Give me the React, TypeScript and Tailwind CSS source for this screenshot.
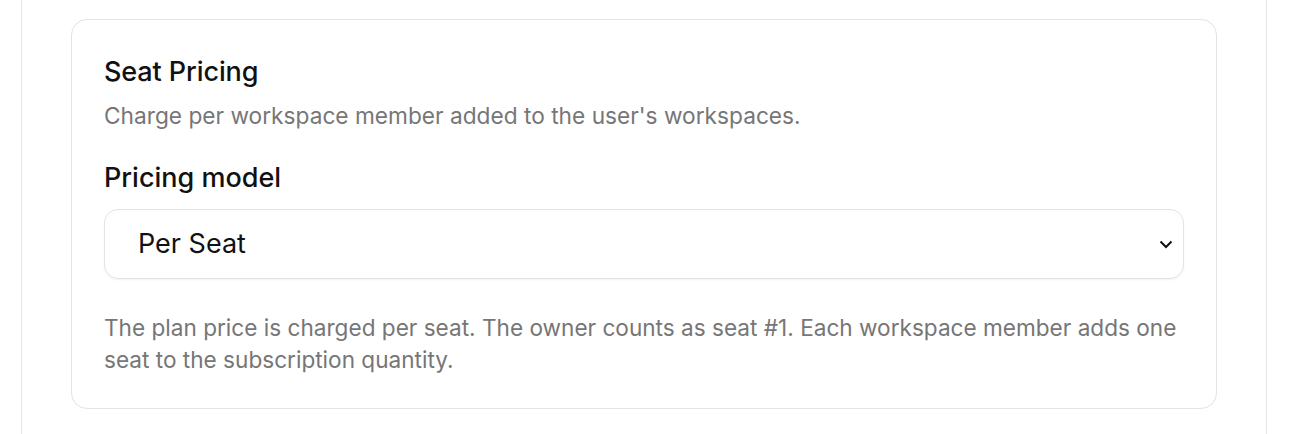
export default function App() {
  return (
    <div className="min-h-[434px] bg-white font-['Inter',sans-serif]">
      <div className="ml-[21px] w-[1246px] min-h-[434px] border-x border-[#e5e5e5] px-[49px] pt-[19px]">
        <section className="rounded-[16px] border border-[#e3e3e3] px-[32px] pt-[34px] pb-[32px]">
          <h2 className="text-[27px] leading-[36px] font-medium tracking-[-0.1px] text-[#111111]">Seat Pricing</h2>
          <p className="mt-[11px] text-[22.7px] leading-[30px] text-[#767676]">
            Charge per workspace member added to the user's workspaces.
          </p>

          <label className="mt-[29px] block text-[27px] leading-[36px] font-medium text-[#111111]">
            Pricing model
          </label>
          <div className="mt-[13px] flex h-[70px] items-center justify-between rounded-[14px] border border-[#e3e3e3] pl-[33px] pr-[10px] shadow-[0_1px_2px_rgba(0,0,0,0.05)]">
            <span className="text-[27px] text-[#111111]">Per Seat</span>
            <svg width="14" height="14" viewBox="0 0 14 14" fill="none" className="text-[#111111]">
              <path d="M1.5 4.5 7 10l5.5-5.5" stroke="currentColor" strokeWidth="2" />
            </svg>
          </div>

          <p className="mt-[33px] text-[22.6px] leading-[32px] text-[#767676]">
            The plan price is charged per seat. The owner counts as seat #1. Each workspace member adds one seat
            to the subscription quantity.
          </p>
        </section>
      </div>
    </div>
  );
}
